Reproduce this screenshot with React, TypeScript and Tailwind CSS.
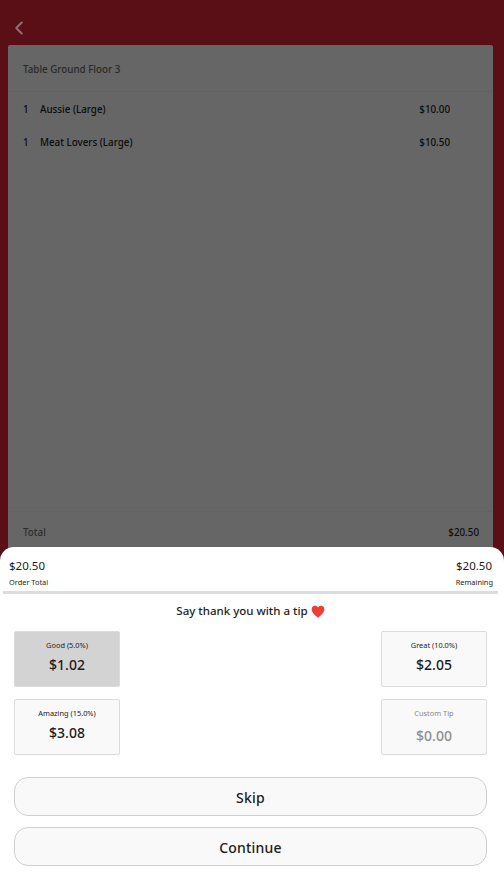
import { ChevronLeft } from 'lucide-react'

type Tip = {
  label: string
  amount: string
  selected?: boolean
  muted?: boolean
}

function TipCard({ label, amount, selected, muted }: Tip) {
  return (
    <div
      className={`flex h-[56px] w-[106px] flex-col items-center rounded-[2px] border border-[#dcdcdc] pt-[7px] ${
        selected ? 'bg-[#d3d3d3]' : 'bg-[#f9f9f9]'
      }`}
    >
      <span className={`text-[7.4px] leading-[12px] ${muted ? 'text-[#8a8a8a]' : 'text-[#222]'}`}>{label}</span>
      <span
        className={`text-[14px] font-medium leading-[20px] ${
          muted ? 'mt-[7px] text-[#8f8f8f]' : 'mt-[4px] text-[#1c1c1c]'
        }`}
      >
        {amount}
      </span>
    </div>
  )
}

function PillButton({ label }: { label: string }) {
  return (
    <button
      type="button"
      className="flex h-[39px] w-full items-center justify-center rounded-[14px] border border-[#cfcfcf] bg-[#f9f9f9] pt-[1px] text-[14px] font-medium tracking-[0.2px] text-[#1c1c1c]"
    >
      {label}
    </button>
  )
}

export default function App() {
  return (
    <div
      className="relative flex h-[882px] w-[504px] flex-col overflow-hidden bg-[#5a0e15] text-[#111]"
      style={{ fontFamily: '"Noto Sans", sans-serif' }}
    >
      <div className="flex h-[45px] shrink-0 items-center pl-[8px] pt-[10px]">
        <ChevronLeft size={22} strokeWidth={2.2} className="text-[#8b7174]" />
      </div>

      <div className="ml-[8px] mr-[11px] flex flex-1 flex-col rounded-t-[2px] bg-[#666666]">
        <div className="flex h-[47px] items-center border-b border-[#626262] pl-[15px] pt-[4px] text-[9.8px] font-medium text-[#2a2a2a]">
          Table Ground Floor 3
        </div>
        <div className="flex h-[420px] flex-col border-b border-[#626262] pl-[15px] pr-[43px] pt-[2px] text-[9.8px] font-medium text-[#0c0c0c]">
          <div className="flex h-[33px] items-center justify-between">
            <div className="flex">
              <span className="w-[17px]">1</span>
              <span>Aussie (Large)</span>
            </div>
            <span>$10.00</span>
          </div>
          <div className="flex h-[33px] items-center justify-between">
            <div className="flex">
              <span className="w-[17px]">1</span>
              <span>Meat Lovers (Large)</span>
            </div>
            <span>$10.50</span>
          </div>
        </div>
        <div className="flex h-[41px] items-center justify-between pl-[15px] pr-[14px] pt-[2px] text-[9.8px] font-medium">
          <span className="text-[#2e2e2e]">Total</span>
          <span className="text-[#0f0f0f]">$20.50</span>
        </div>
      </div>

      {/* tip sheet sits over the dimmed order */}
      <div className="absolute inset-x-0 bottom-0 flex h-[335px] flex-col rounded-t-[14px] bg-white">
        <div className="flex justify-between pl-[9px] pr-[11px] pt-[10px] text-[#1c1c1c]">
          <div className="flex flex-col items-start">
            <span className="text-[11.5px] leading-[18px]">$20.50</span>
            <span className="mt-[2px] text-[7.4px] leading-[10px]">Order Total</span>
          </div>
          <div className="flex flex-col items-end">
            <span className="pr-[1px] text-[11.5px] leading-[18px]">$20.50</span>
            <span className="mt-[2px] text-[7.4px] leading-[10px]">Remaining</span>
          </div>
        </div>
        <div className="ml-[3px] mt-[4px] h-[3px] w-[495px] bg-[#dcdcdc]" />
        <div className="mt-[9px] flex h-[16px] items-center justify-center pr-[3px] text-[11.5px] font-medium leading-[16px] text-[#1c1c1c]">
          Say thank you with a tip
          <svg viewBox="0 0 24 22" className="ml-[3px] h-[13px] w-[14px]">
            <path
              d="M12 21.5C5 16 1 12 1 7a6 6 0 0 1 11-3.3A6 6 0 0 1 23 7c0 5-4 9-11 14.5z"
              fill="#ef3e36"
            />
          </svg>
        </div>

        <div className="mt-[12px] flex justify-between pl-[14px] pr-[17px]">
          <TipCard label="Good (5.0%)" amount="$1.02" selected />
          <TipCard label="Great (10.0%)" amount="$2.05" />
        </div>
        <div className="mt-[12px] flex justify-between pl-[14px] pr-[17px]">
          <TipCard label="Amazing (15.0%)" amount="$3.08" />
          <TipCard label="Custom Tip" amount="$0.00" muted />
        </div>

        <div className="mt-[22px] flex flex-col gap-[11px] pl-[14px] pr-[17px]">
          <PillButton label="Skip" />
          <PillButton label="Continue" />
        </div>
      </div>
    </div>
  )
}
